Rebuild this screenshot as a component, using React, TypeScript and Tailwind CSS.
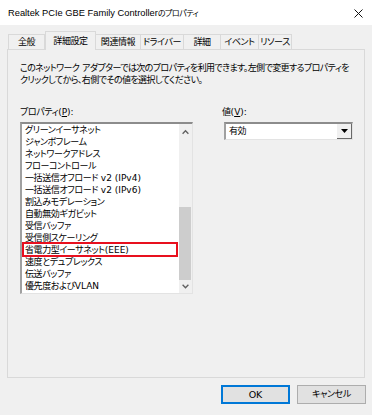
import React from 'react';

const jp = "font-['Liberation_Sans','Noto_Sans_CJK_JP',sans-serif] [font-feature-settings:'palt']";

// Latin runs in the dialog body are wider (Verdana-like) than the CJK text around them
function T({ text, latin = "font-['DejaVu_Sans',sans-serif] text-[9px]" }: { text: string; latin?: string }) {
  const parts = text.split(/([\x20-\x7e]+)/).filter(Boolean);
  return (
    <>
      {parts.map((p, i) =>
        /^[\x20-\x7e]+$/.test(p) ? (
          <span key={i} className={`${latin} tracking-normal`}>
            {p}
          </span>
        ) : (
          <React.Fragment key={i}>{p}</React.Fragment>
        )
      )}
    </>
  );
}

const tabs = [
  { label: '全般', w: 'w-[37px]' },
  { label: '詳細設定', w: 'w-[51px]', active: true },
  { label: '関連情報', w: 'w-[46px]' },
  { label: 'ドライバー', w: 'w-[44px]' },
  { label: '詳細', w: 'w-[38px]' },
  { label: 'イベント', w: 'w-[39px]' },
  { label: 'リソース', w: 'w-[34px]' },
];

const items = [
  'グリーンイーサネット',
  'ジャンボフレーム',
  'ネットワークアドレス',
  'フローコントロール',
  '一括送信オフロード v2 (IPv4)',
  '一括送信オフロード v2 (IPv6)',
  '割込みモデレーション',
  '自動無効ギガビット',
  '受信バッファ',
  '受信側スケーリング',
  '省電力型イーサネット(EEE)',
  '速度とデュプレックス',
  '伝送バッファ',
  '優先度およびVLAN',
];

export default function App() {
  return (
    <div className={`w-[372px] h-[415px] bg-[#f0f0f0] text-[9px] tracking-[-0.4px] text-black flex flex-col ${jp}`}>
      {/* title bar */}
      <div className="h-[25px] bg-white flex items-center justify-between pl-[8px] pr-[9px] pt-[2px] shrink-0">
        <span className="leading-none text-[8px] tracking-[-0.5px]">
          <T text="Realtek PCIe GBE Family Controllerのプロパティ" latin="font-['Liberation_Sans',sans-serif] text-[9.3px]" />
        </span>
        <svg width="9" height="9" viewBox="0 0 9 9" className="text-[#111]">
          <path d="M0.5 0.5 L8.5 8.5 M8.5 0.5 L0.5 8.5" stroke="currentColor" strokeWidth="1" />
        </svg>
      </div>

      {/* tabs */}
      <div className="flex items-end h-[18px] mt-[6px] pl-[8px] relative z-10">
        {tabs.map((t) =>
          t.active ? (
            <div
              key={t.label}
              className={`${t.w} h-[19px] -mb-px bg-[#f0f0f0] border border-b-0 border-[#d9d9d9] flex items-center justify-center leading-none`}
            >
              {t.label}
            </div>
          ) : (
            <div
              key={t.label}
              className={`${t.w} h-[15px] bg-[#f0f0f0] border border-b-0 border-[#d9d9d9] -ml-px first:ml-0 flex items-center justify-center leading-none`}
            >
              {t.label}
            </div>
          )
        )}
      </div>

      {/* panel */}
      <div className="mx-[7px] h-[329px] border border-[#d9d9d9] bg-[#f0f0f0] pl-[12px] pt-[12px] shrink-0">
        <p className="leading-[12px] whitespace-nowrap tracking-[-0.6px]">
          <T text="このネットワーク アダプターでは次のプロパティを利用できます。左側で変更するプロパティを" />
          <br />
          クリックしてから、右側でその値を選択してください。
        </p>

        <div className="flex mt-[20px]">
          <div className="w-[173px]">
            <div className="leading-[12px] h-[16px]">
              プロパティ
              <span className="font-['DejaVu_Sans',sans-serif] text-[9px] tracking-normal">
                (<span className="underline">P</span>):
              </span>
            </div>
            <div className="h-[172px] border-t-2 border-l-2 border-t-[#8c8c8c] border-l-[#a0a0a0] border-r border-b border-r-[#e3e3e3] border-b-[#e3e3e3] bg-white flex">
              <div className="flex-1">
                {items.map((it) => (
                  <div key={it} className="relative h-[12px] leading-[12px] pl-[3px] whitespace-nowrap">
                    <T text={it} />
                    {it === '省電力型イーサネット(EEE)' && (
                      <div className="absolute -top-[2px] left-0 right-[1px] h-[15px] border-2 border-[#e8101e]" />
                    )}
                  </div>
                ))}
              </div>
              <div className="w-[13px] bg-[#f0f0f0] flex flex-col items-center">
                <svg width="9" height="14" viewBox="0 0 9 14" className="mt-[1px]">
                  <path d="M1.5 9 L4.5 6 L7.5 9" stroke="#606060" strokeWidth="1.4" fill="none" />
                </svg>
                <div className="flex-1 w-full flex flex-col">
                  <div className="h-[68px]" />
                  <div className="h-[73px] w-[12px] bg-[#cdcdcd]" />
                </div>
                <svg width="9" height="14" viewBox="0 0 9 14">
                  <path d="M1.5 5 L4.5 8 L7.5 5" stroke="#606060" strokeWidth="1.4" fill="none" />
                </svg>
              </div>
            </div>
          </div>

          <div className="ml-[29px]">
            <div className="leading-[12px] h-[16px]">
              値
              <span className="font-['DejaVu_Sans',sans-serif] text-[9px] tracking-normal">
                (<span className="underline">V</span>):
              </span>
            </div>
            <div className="ml-[2px] w-[129px] h-[18px] border-t-2 border-l-2 border-t-[#8c8c8c] border-l-[#a0a0a0] border-r border-b border-r-[#e3e3e3] border-b-[#e3e3e3] bg-white flex items-center">
              <span className="flex-1 pl-[3px] leading-none">有効</span>
              <div className="w-[15px] h-[15px] bg-[#f0f0f0] border-r border-b border-[#696969] flex items-center justify-center">
                <svg width="7" height="4" viewBox="0 0 7 4">
                  <path d="M0 0 H7 L3.5 4 Z" fill="#000" />
                </svg>
              </div>
            </div>
          </div>
        </div>
      </div>

      {/* buttons */}
      <div className="flex justify-end gap-[7px] pr-[6px] mt-[7px]">
        <button className="w-[69px] h-[19px] bg-[#e1e1e1] border-2 border-[#0078d7] leading-none font-['DejaVu_Sans',sans-serif] text-[9.5px] tracking-normal">
          OK
        </button>
        <button className="w-[69px] h-[19px] bg-[#e1e1e1] border border-[#adadad] leading-none">キャンセル</button>
      </div>
    </div>
  );
}
